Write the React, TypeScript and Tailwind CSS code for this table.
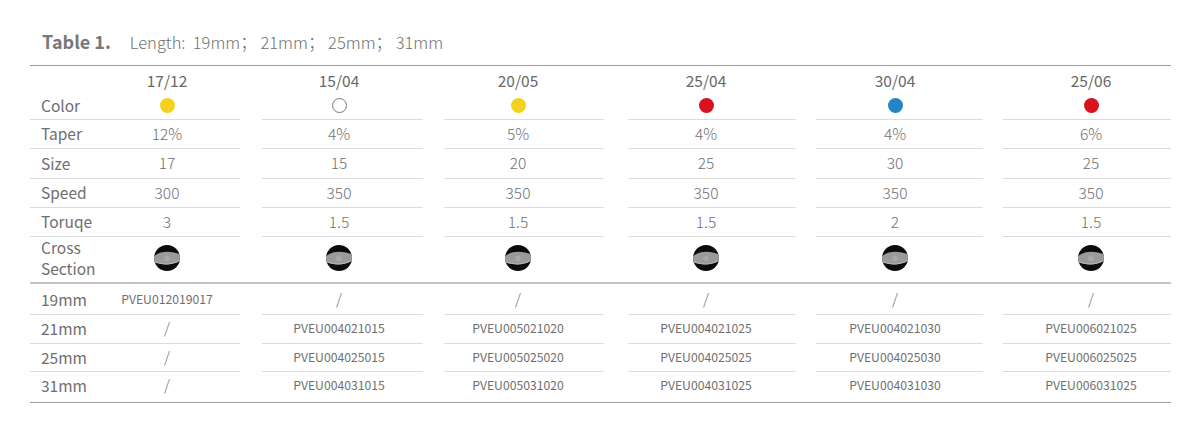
import React from 'react';

type Cell = React.ReactNode;

const font = "font-['Noto_Sans_CJK_SC','Noto_Sans',sans-serif]";

// column boxes after the first one (line segment width, gap before it, text offset)
const cols = [
  { box: 'w-[161px] ml-[22px]', pad: 'pr-[7px]' },
  { box: 'w-[160px] ml-[21px]', pad: 'pr-[12px]' },
  { box: 'w-[168px] ml-[24px]', pad: 'pr-[12px]' },
  { box: 'w-[167px] ml-[20px]', pad: 'pr-[9px]' },
  { box: 'w-[168px] ml-[20px]', pad: 'pl-[8px]' },
];

const Dot = ({ color }: { color: string }) => {
  if (color === 'white') {
    return <span className="inline-block w-[15px] h-[15px] rounded-full border border-[#777] bg-white" />;
  }
  const cls: Record<string, string> = {
    yellow: 'bg-[#f3d21f]',
    red: 'bg-[#d8121e]',
    blue: 'bg-[#2284c4]',
  };
  return <span className={`inline-block w-[15px] h-[15px] rounded-full ${cls[color]}`} />;
};

const CrossSection = () => (
  <svg width="26" height="26" viewBox="-13 -13 26 26">
    <defs>
      <clipPath id="cs-clip">
        <circle cx="0" cy="0" r="13" />
      </clipPath>
    </defs>
    <circle cx="0" cy="0" r="13" fill="#0b0b0b" />
    <g clipPath="url(#cs-clip)">
      <path d="M-14 -1 C-8 -7 4 -8 14 -3 L14 2 C6 8 -6 7 -14 4 Z" fill="#9a9a9a" />
      <path d="M-14 3 C-6 6 6 7 14 1 L14 2 C6 8 -6 7 -14 4 Z" fill="#b5b5b5" />
    </g>
    <circle cx="0" cy="0.5" r="2.3" fill="none" stroke="#bdbdbd" strokeWidth="0.6" />
    <path d="M-1.5 0.5 H1.5 M0 -1 V2" stroke="#bdbdbd" strokeWidth="0.5" />
  </svg>
);

type RowProps = {
  label?: React.ReactNode;
  cells: Cell[];
  h: string;
  line?: boolean;
  text?: string;
  shift?: string;
};

const Row = ({ label, cells, h, line = true, text = 'text-[15.5px] font-light text-[#6f6f6f]', shift = 'pb-[1px]' }: RowProps) => {
  const border = line ? 'border-b border-[#dcdcdc]' : '';
  return (
    <div className={`flex ${h}`}>
      <div className={`w-[210px] flex items-center ${border} ${shift}`}>
        <div className="w-[64px] pl-[11px] text-[15.5px] text-[#6e6e6e] leading-[21px] whitespace-nowrap">{label}</div>
        <div className={`flex-1 flex justify-center items-center ${text}`}>{cells[0]}</div>
      </div>
      {cols.map((c, i) => (
        <div key={i} className={`${c.box} ${border} ${shift} flex items-center justify-center ${c.pad} ${text}`}>
          {cells[i + 1]}
        </div>
      ))}
    </div>
  );
};

const dates = ['17/12', '15/04', '20/05', '25/04', '30/04', '25/06'];
const colors = ['yellow', 'white', 'yellow', 'red', 'blue', 'red'];
const specs: { label: string; h: string; values: string[] }[] = [
  { label: 'Taper', h: 'h-[29px]', values: ['12%', '4%', '5%', '4%', '4%', '6%'] },
  { label: 'Size', h: 'h-[30px]', values: ['17', '15', '20', '25', '30', '25'] },
  { label: 'Speed', h: 'h-[29px]', values: ['300', '350', '350', '350', '350', '350'] },
  { label: 'Toruqe', h: 'h-[29px]', values: ['3', '1.5', '1.5', '1.5', '2', '1.5'] },
];
const lengths: { label: string; h: string; line: boolean; shift: string; values: string[] }[] = [
  { label: '19mm', h: 'h-[31px]', line: true, shift: 'pb-[0px]', values: ['PVEU012019017', '/', '/', '/', '/', '/'] },
  { label: '21mm', h: 'h-[29px]', line: true, shift: 'pb-[1px]', values: ['/', 'PVEU004021015', 'PVEU005021020', 'PVEU004021025', 'PVEU004021030', 'PVEU006021025'] },
  { label: '25mm', h: 'h-[28px]', line: true, shift: 'pb-[0px]', values: ['/', 'PVEU004025015', 'PVEU005025020', 'PVEU004025025', 'PVEU004025030', 'PVEU006025025'] },
  { label: '31mm', h: 'h-[30px]', line: false, shift: 'pb-[3px]', values: ['/', 'PVEU004031015', 'PVEU005031020', 'PVEU004031025', 'PVEU004031030', 'PVEU006031025'] },
];

const Code = ({ v }: { v: string }) =>
  v === '/' ? <span className="text-[15px] font-light">/</span> : <span className="text-[12.2px]">{v}</span>;

export default function App() {
  return (
    <div className={`w-[1201px] h-[442px] bg-white ${font}`}>
      <div className="pl-[42px] pt-[31px] pb-[12px] flex items-baseline text-[#777] leading-[21px]">
        <span className="text-[18px] font-bold">Table 1.</span>
        <span className="ml-[19px] text-[16.5px] font-light text-[#707070] whitespace-pre">Length:  19mm； 21mm； 25mm； 31mm</span>
      </div>

      <div className="ml-[30px] w-[1141px] border-t border-[#9c9c9c]">
        <Row h="h-[29px]" line={false} shift="pb-[0px]" text="text-[15.5px] text-[#686868]" cells={dates} />
        <Row h="h-[25px]" label="Color" shift="pb-[4px]" cells={colors.map((c, i) => <Dot key={i} color={c} />)} />
        {specs.map(s => (
          <Row key={s.label} h={s.h} label={s.label} cells={s.values} />
        ))}
        <Row
          h="h-[45px]"
          line={false}
          shift="pb-[3px]"
          label={<>Cross<br />Section</>}
          cells={dates.map((_, i) => <CrossSection key={i} />)}
        />
        <div className="border-t-2 border-[#c4c4c4]">
          {lengths.map(l => (
            <Row
              key={l.label}
              h={l.h}
              line={l.line}
              shift={l.shift}
              label={l.label}
              text="text-[#6f6f6f]"
              cells={l.values.map((v, i) => <Code key={i} v={v} />)}
            />
          ))}
        </div>
        <div className="border-t border-[#9c9c9c]" />
      </div>
    </div>
  );
}
